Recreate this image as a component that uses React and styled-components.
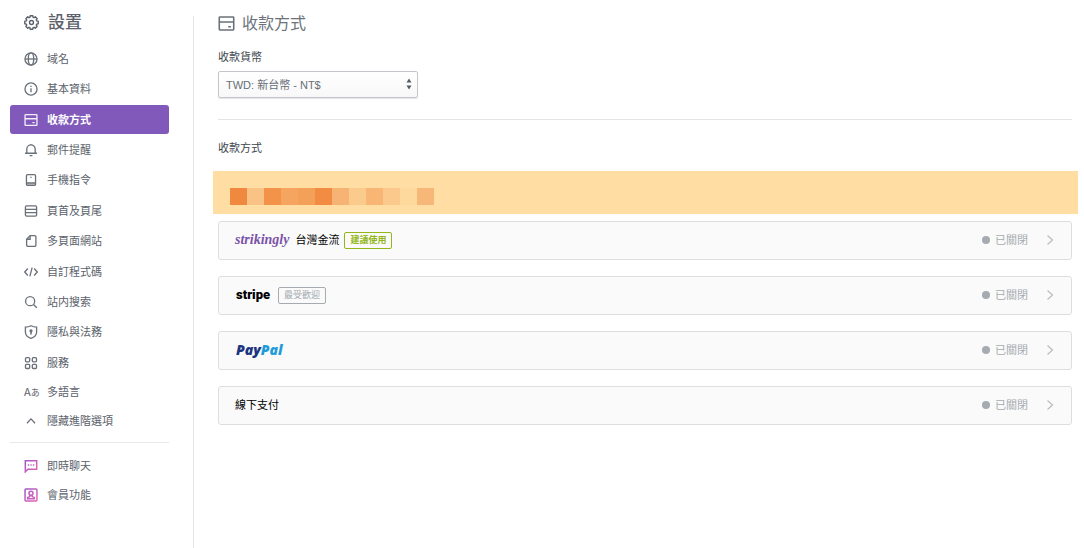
import React, { useState } from 'react';
import styled, { createGlobalStyle } from 'styled-components';

const GlobalStyle = createGlobalStyle`
  * {
    box-sizing: border-box;
  }
  body {
    margin: 0;
    background: #fff;
    color: #5b626b;
    font-family: "Liberation Sans", "Noto Sans CJK TC", sans-serif;
    font-size: 11px;
    line-height: 16px;
  }
  button, select {
    font-family: inherit;
    font-size: inherit;
    line-height: inherit;
  }
`;

// 8-tooth outline for the settings gear
const gearPoints = Array.from({ length: 8 }, (_, i) => {
    const at = (deg, r) => {
        const a = ((i * 45 + deg) * Math.PI) / 180;
        return `${(8 + r * Math.sin(a)).toFixed(2)},${(8 - r * Math.cos(a)).toFixed(2)}`;
    };
    return `${at(-11, 7.3)} ${at(11, 7.3)} ${at(17, 5.8)} ${at(28, 5.8)}`;
}).join(' ');

const shapes = {
    gear: (
        <>
            <polygon points={gearPoints} strokeLinejoin="round" />
            <circle cx="8" cy="8" r="2.1" />
        </>
    ),
    globe: (
        <>
            <circle cx="8" cy="8" r="6.9" />
            <ellipse cx="8" cy="8" rx="3.1" ry="6.9" />
            <path d="M1 8h14" />
        </>
    ),
    info: (
        <>
            <circle cx="8" cy="8" r="6.9" />
            <path d="M8 7.2v4.4M8 4.3v1.5" />
        </>
    ),
    card: (
        <>
            <rect x="1.2" y="1.9" width="13.6" height="12.2" rx="0.6" />
            <path d="M1.2 6.6h13.6M9.6 11h2.6" />
        </>
    ),
    bell: <path d="M1.2 11.7h13.6M3.2 11.5V7a4.8 4.8 0 0 1 9.6 0v4.5M8 2.2V1M6.4 14.4h3.2" />,
    phone: (
        <>
            <rect x="2.8" y="1.8" width="10.4" height="12.4" rx="1.4" />
            <path d="M2.8 11.4h10.4M7.3 5h1.4" />
            <path d="M3 12.8h10" opacity="0.5" />
        </>
    ),
    rows: (
        <>
            <rect x="1.6" y="2.2" width="12.8" height="11.6" rx="1.4" />
            <path d="M1.6 6.2h12.8M1.6 9.8h12.8" />
        </>
    ),
    page: (
        <>
            <path d="M7 1.9h5.2a1.4 1.4 0 0 1 1.4 1.4v9.4a1.4 1.4 0 0 1-1.4 1.4H4.4A1.4 1.4 0 0 1 3 12.7V6z" />
            <path d="M7 2v4H3.2" />
        </>
    ),
    code: <path d="M4.4 4 .8 8l3.6 4M11.600 4l3.600 4-3.600 4M9.3 2.9 6.7 13.1" />,
    search: (
        <>
            <circle cx="7" cy="7" r="5.2" />
            <path d="m10.9 10.9 3.7 3.7" />
        </>
    ),
    shield: (
        <>
            <path d="M8 .9c2 1.1 4 1.6 6.4 1.6V8c0 3.6-2.4 6-6.4 7.2C4 14 1.6 11.6 1.6 8V2.5C4 2.5 6 2 8 .9z" />
            <circle cx="8" cy="6.6" r="1.1" fill="currentColor" />
            <path d="M8 7v3.8" strokeWidth="1.8" />
        </>
    ),
    grid: (
        <>
            <rect x="1.7" y="1.9" width="4.8" height="4.8" rx="1.2" />
            <rect x="9.5" y="1.9" width="4.8" height="4.8" rx="1.2" />
            <rect x="1.7" y="9.5" width="4.8" height="4.8" rx="1.2" />
            <rect x="9.5" y="9.5" width="4.8" height="4.8" rx="1.2" />
        </>
    ),
    up: <path d="m3.4 10.6 4.600-5 4.600 5" />,
    chat: (
        <>
            <path d="M1.5 14.7V2h13v9.8H4.4z" />
            <path d="M4.4 6.9h1.5M7.3 6.9h1.5M10.2 6.9h1.5" />
        </>
    ),
    member: (
        <>
            <rect x="1.2" y="1.2" width="13.6" height="13.6" rx="1" />
            <circle cx="8" cy="6" r="2.3" />
            <path d="M6.7 8v1.8l-2.5 1v1.6h7.6v-1.6l-2.5-1V8" />
        </>
    ),
};

const Icon = ({ name, size = 14, gradient }) => (
    <svg
        width={size}
        height={size}
        viewBox="0 0 16 16"
        fill="none"
        stroke={gradient ? `url(#${name}-tint)` : 'currentColor'}
        strokeWidth={gradient ? 1.7 : 1.5}
        aria-hidden="true"
    >
        {gradient && (
            <linearGradient id={`${name}-tint`} gradientUnits="userSpaceOnUse" x1="1" y1="2" x2="15" y2="14">
                <stop offset="0" stopColor="#9a45c4" />
                <stop offset="1" stopColor="#e056b0" />
            </linearGradient>
        )}
        {shapes[name]}
    </svg>
);

const menu = [
    { icon: 'globe', label: '域名' },
    { icon: 'info', label: '基本資料' },
    { icon: 'card', label: '收款方式' },
    { icon: 'bell', label: '郵件提醒' },
    { icon: 'phone', label: '手機指令' },
    { icon: 'rows', label: '頁首及頁尾' },
    { icon: 'page', label: '多頁面網站' },
    { icon: 'code', label: '自訂程式碼' },
    { icon: 'search', label: '站内搜索' },
    { icon: 'shield', label: '隱私與法務' },
    { icon: 'grid', label: '服務' },
    { icon: 'language', label: '多語言' },
    { icon: 'up', label: '隱藏進階選項' },
];

const extras = [
    { icon: 'chat', label: '即時聊天' },
    { icon: 'member', label: '會員功能' },
];

const mosaic = [
    '#f1883f', '#f8c385', '#f39349', '#f5a560', '#f3a058', '#f18c42',
    '#f7b374', '#facb8c', '#f8b574', '#fbc98b', '#fdd99d', '#f7b778',
];

const Gateway = ({ children }) => (
    <Card type="button">
        <CardName>{children}</CardName>
        <Status>已關閉</Status>
        <svg width="8" height="12" viewBox="0 0 8 12" fill="none" stroke="#b9bdc1" strokeWidth="1.2" aria-hidden="true">
            <path d="M1.500 1.500 6.500 6l-5 4.500" />
        </svg>
    </Card>
);

const App = () => {
    const [active, setActive] = useState('收款方式');

    return (
        <Page>
            <GlobalStyle />
            <Sidebar>
                <SidebarTitle>
                    <Icon name="gear" size={15} />
                    設置
                </SidebarTitle>
                <Menu>
                    {menu.map(({ icon, label }) => (
                        <li key={label}>
                            <MenuLink
                                href="#"
                                $active={label === active}
                                onClick={(e) => {
                                    e.preventDefault();
                                    setActive(label);
                                }}
                            >
                                {icon === 'language' ? (
                                    <LanguageMark aria-hidden="true">A<small>あ</small></LanguageMark>
                                ) : (
                                    <Icon name={icon} />
                                )}
                                {label}
                            </MenuLink>
                        </li>
                    ))}
                </Menu>
                <ExtraMenu>
                    {extras.map(({ icon, label }) => (
                        <li key={label}>
                            <MenuLink href="#">
                                <Icon name={icon} gradient />
                                {label}
                            </MenuLink>
                        </li>
                    ))}
                </ExtraMenu>
            </Sidebar>

            <Content>
                <Title>
                    <Icon name="card" size={17} />
                    收款方式
                </Title>
                <Label htmlFor="currency">收款貨幣</Label>
                <SelectBox>
                    <select id="currency" defaultValue="TWD">
                        <option value="TWD">TWD: 新台幣 - NT$</option>
                    </select>
                    <svg width="6" height="12" viewBox="0 0 6 12" fill="#555c64" aria-hidden="true">
                        <path d="M3 .5l2.500 4h-5zM3 11.500l2.500-4h-5z" />
                    </svg>
                </SelectBox>
                <Divider />
                <SectionTitle>收款方式</SectionTitle>
                <Banner>
                    {mosaic.map((color) => (
                        <Tile key={color} $color={color} />
                    ))}
                </Banner>
                <Cards>
                    <Gateway>
                        <StrikinglyLogo>strikingly</StrikinglyLogo>
                        台灣金流
                        <Badge $green>建議使用</Badge>
                    </Gateway>
                    <Gateway>
                        <StripeLogo>stripe</StripeLogo>
                        <Badge>最受歡迎</Badge>
                    </Gateway>
                    <Gateway>
                        <PaypalLogo>Pay<span>Pal</span></PaypalLogo>
                    </Gateway>
                    <Gateway>線下支付</Gateway>
                </Cards>
            </Content>
        </Page>
    );
};

const Page = styled.div`
  display: flex;
  min-height: 100vh;
  padding-top: 16px;
`;

/* Sidebar */
const Sidebar = styled.aside`
  flex: 0 0 194px;
  padding: 0 24px 0 10px;
  border-right: 1px solid #e2e4e7;
`;

const SidebarTitle = styled.h1`
  display: flex;
  align-items: center;
  gap: 9px;
  height: 13px;
  margin: 0 0 15px;
  padding-left: 14px;
  color: #5b626b;
  font-size: 17px;
  font-weight: 500;
`;

const Menu = styled.ul`
  margin: 0;
  padding: 0 0 7px;
  list-style: none;

  li {
    margin-bottom: 1px;
  }
  li:nth-child(5n), li:nth-child(5n + 2) {
    margin-bottom: 2px;
  }
  li:nth-child(n + 11) {
    margin-bottom: 0;
  }
`;

const ExtraMenu = styled(Menu)`
  padding: 8px 0 0;
  border-top: 1px solid #e8e9eb;

  li:nth-child(n) {
    margin: 0;
  }
`;

const MenuLink = styled.a`
  display: flex;
  align-items: center;
  gap: 9px;
  height: 29px;
  padding-left: 14px;
  border-radius: 3px;
  background: ${({ $active }) => ($active ? '#8159bb' : 'transparent')};
  color: ${({ $active }) => ($active ? '#fff' : '#5b626b')};
  font-weight: ${({ $active }) => ($active ? 700 : 400)};
  text-decoration: none;

  svg {
    opacity: 0.9;
  }
`;

const LanguageMark = styled.span`
  width: 14px;
  white-space: nowrap;
  font-family: "Noto Sans CJK JP", sans-serif;
  font-size: 11px;

  small {
    font-size: 9px;
  }
`;

/* Main column */
const Content = styled.main`
  flex: 1;
  min-width: 0;
  padding: 0 12px 24px 24px;
`;

const Title = styled.h2`
  display: flex;
  align-items: center;
  gap: 7px;
  height: 15px;
  margin: 0 0 18px;
  color: #6b727b;
  font-size: 16px;
  font-weight: 400;
`;

const Label = styled.label`
  display: block;
  margin-bottom: 6px;
  color: #40464d;
`;

const SelectBox = styled.div`
  position: relative;
  width: 200px;

  select {
    display: block;
    width: 100%;
    height: 27px;
    padding: 0 20px 0 7px;
    appearance: none;
    border: 1px solid #c3c7cb;
    border-radius: 2px;
    background: linear-gradient(#fff, #f8f8f8);
    box-shadow: 0 1px 1px rgba(0, 0, 0, 0.1);
    color: #676e77;
  }
  svg {
    position: absolute;
    top: 7px;
    right: 6px;
    pointer-events: none;
  }
`;

const Divider = styled.hr`
  margin: 21px 0 20px;
  border: 0;
  border-top: 1px solid #e2e4e7;
`;

const SectionTitle = styled.h3`
  margin: 0 0 15px;
  color: #40464d;
  font-size: 11px;
  font-weight: 400;
`;

const Banner = styled.div`
  display: flex;
  margin: 0 -6px 7px -5px;
  padding: 17px 17px 9px;
  background: #ffdda3;
`;

const Tile = styled.span`
  width: 17px;
  height: 17px;
  background: ${({ $color }) => $color};
`;

const Cards = styled.div`
  display: grid;
  gap: 16px;
`;

const Card = styled.button`
  display: flex;
  align-items: center;
  width: 100%;
  height: 39px;
  padding: 0 17px 1px 16px;
  border: 1px solid #dcdee0;
  border-radius: 3px;
  background: #fafafa;
  color: #000;
  text-align: left;
  cursor: pointer;
`;

const CardName = styled.span`
  display: flex;
  flex: 1;
  align-items: center;
`;

const Status = styled.span`
  display: flex;
  align-items: center;
  margin-right: 18px;
  color: #a5abb0;

  &::before {
    content: "";
    width: 8px;
    height: 8px;
    margin-right: 5px;
    border-radius: 50%;
    background: #a5abb0;
  }
`;

const Badge = styled.span`
  height: 17px;
  margin-left: 5px;
  padding: 0 5px;
  border: 1px solid ${({ $green }) => ($green ? '#93b719' : '#a5abb0')};
  border-radius: 2px;
  color: ${({ $green }) => ($green ? '#93b719' : '#a5abb0')};
  font-size: 9px;
  font-weight: ${({ $green }) => ($green ? 700 : 400)};
  line-height: 15px;
`;

const StrikinglyLogo = styled.span`
  margin-right: 6px;
  color: #7a52a8;
  font-family: "Liberation Serif", serif;
  font-size: 14px;
  font-style: italic;
  font-weight: 700;
`;

const StripeLogo = styled.span`
  margin: 0 3px 0 1px;
  font-family: Roboto, sans-serif;
  font-size: 13px;
  font-weight: 900;
`;

const PaypalLogo = styled.span`
  margin-left: 1px;
  color: #1c3582;
  font-family: "Open Sans", sans-serif;
  font-size: 14px;
  font-style: italic;
  font-weight: 800;

  span {
    color: #1f9bd8;
  }
`;

export default App;
